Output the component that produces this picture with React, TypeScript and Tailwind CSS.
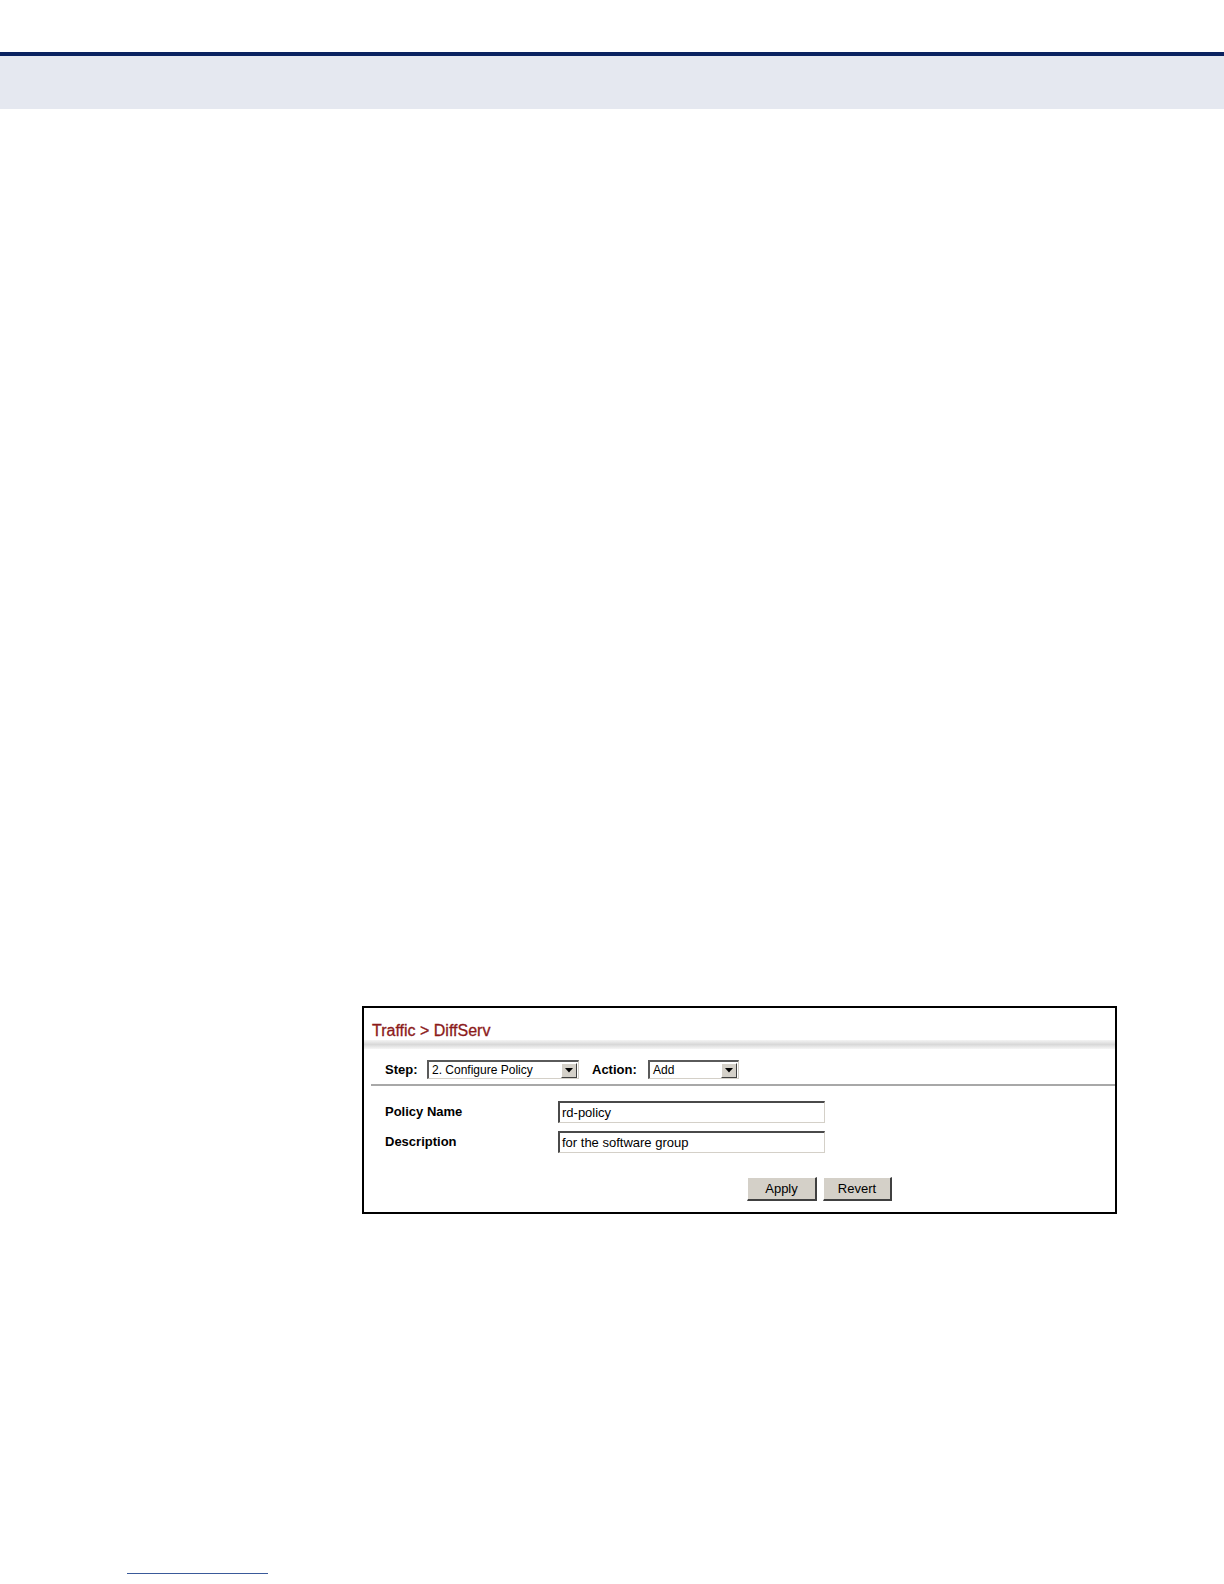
import React from 'react';

const font = { fontFamily: '"Liberation Sans", Arial, sans-serif' };

function SelectBox({ value, width }: { value: string; width: string }) {
  return (
    <div
      className={`${width} h-[19px] flex items-center justify-between bg-white border-t-2 border-l-2 border-t-[#5a5a5a] border-l-[#5a5a5a] border-b border-r border-b-[#d4d0c8] border-r-[#d4d0c8]`}
    >
      <span className="pl-[3px] text-[12px] leading-[15px] text-black">{value}</span>
      <div className="w-[16px] h-[15px] mr-[1px] flex items-center justify-center bg-[#d4d0c8] border-t border-l border-t-white border-l-white border-b border-r border-b-[#404040] border-r-[#404040]">
        <svg width="8" height="5" viewBox="0 0 8 5">
          <path d="M0 0 H8 L4 4.5 Z" fill="#000" />
        </svg>
      </div>
    </div>
  );
}

function TextField({ value }: { value: string }) {
  return (
    <div className="w-[267px] h-[22px] flex items-center bg-white border-t-2 border-l-2 border-t-[#4a4a4a] border-l-[#4a4a4a] border-b border-r border-b-[#d4d0c8] border-r-[#d4d0c8]">
      <span className="pl-[2px] text-[13px] leading-[16px] text-black">{value}</span>
    </div>
  );
}

function Button({ label, width }: { label: string; width: string }) {
  return (
    <button
      className={`${width} h-[24px] bg-[#d4d0c8] text-[13px] text-black border-t border-l border-t-white border-l-white border-b-2 border-r-2 border-b-[#404040] border-r-[#404040]`}
    >
      {label}
    </button>
  );
}

export default function App() {
  return (
    <div className="w-full min-h-[1584px] bg-white pt-[52px]" style={font}>
      {/* Page header band */}
      <div className="h-[4px] bg-[#0a2260]" />
      <div className="h-[53px] bg-[#e5e8f0]" />

      {/* DiffServ panel */}
      <div className="mt-[897px] ml-[362px] w-[755px] h-[208px] border-2 border-black bg-white">
        <div className="h-[32px] pl-[8px] pt-[11px]">
          <span className="text-[16px] leading-[18px] text-[#8b1a1a] [-webkit-text-stroke:0.3px_#8b1a1a]">
            Traffic &gt; DiffServ
          </span>
        </div>
        <div className="h-[9px] bg-gradient-to-b from-[#f4f4f4] via-[#d8d8d8] to-[#f6f6f6]" />

        <div className="mt-[11px] h-[19px] flex items-center pl-[21px]">
          <span className="text-[13px] font-bold text-black w-[42px]">Step:</span>
          <SelectBox value="2. Configure Policy" width="w-[152px]" />
          <span className="ml-[13px] text-[13px] font-bold text-black w-[56px]">Action:</span>
          <SelectBox value="Add" width="w-[91px]" />
        </div>

        <div className="mt-[5px] ml-[7px] h-[2px] bg-[#a8a8a8]" />

        <div className="mt-[15px] flex flex-col gap-[8px] pl-[21px]">
          <div className="flex items-center">
            <span className="w-[173px] text-[13px] font-bold text-black">Policy Name</span>
            <TextField value="rd-policy" />
          </div>
          <div className="flex items-center">
            <span className="w-[173px] text-[13px] font-bold text-black">Description</span>
            <TextField value="for the software group" />
          </div>
        </div>

        <div className="mt-[24px] flex gap-[6px] pl-[383px]">
          <Button label="Apply" width="w-[70px]" />
          <Button label="Revert" width="w-[69px]" />
        </div>
      </div>

      {/* Footer rule */}
      <div className="mt-[359px] ml-[127px] w-[141px] h-px bg-[#3a5a9a]" />
    </div>
  );
}
